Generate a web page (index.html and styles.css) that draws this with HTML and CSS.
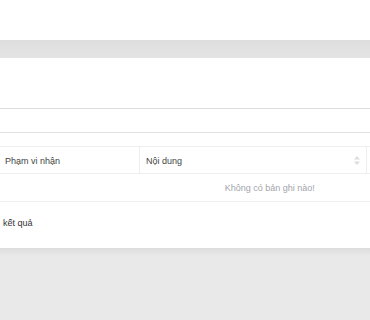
FILE: index.html
```html
<!DOCTYPE html>
<html lang="vi">
<head>
    <meta charset="UTF-8">
    <title>Thông báo</title>
    <link rel="stylesheet" href="styles.css">
</head>
<body>
    <div class="topbar"></div>
    <div class="band"></div>
    <div class="panel">
        <div class="filters">
            <div class="filter-row"></div>
            <div class="filter-row"></div>
        </div>
        <div class="table-wrap">
            <table class="grid">
                <thead>
                    <tr>
                        <th class="col-scope">Phạm vi nhận</th>
                        <th class="col-content">Nội dung
                            <svg class="sort" width="6" height="9" viewBox="0 0 6 9">
                                <path d="M3 0 L6 3.5 H0 Z M3 9 L0 5.5 H6 Z" fill="#ddd"/>
                            </svg>
                        </th>
                        <th class="col-rest"></th>
                    </tr>
                </thead>
                <tbody>
                    <tr>
                        <td class="empty" colspan="3">Không có bản ghi nào!</td>
                    </tr>
                </tbody>
            </table>
        </div>
        <div class="summary">kết quả</div>
    </div>
    <div class="page-bottom"></div>
</body>
</html>
```

FILE: styles.css
```css
body {
    margin: 0;
    background-color: #e9e9e9;
    font-family: "Liberation Sans", Arial, sans-serif;
    color: #333;
    overflow: hidden;
}
.topbar {
    height: 40px;
    background-color: #fff;
}
.band {
    height: 18px;
    background: linear-gradient(#dedede, #e4e4e4);
}
.panel {
    background-color: #fff;
    height: 190px;
    overflow: hidden;
}
.filters {
    padding-top: 50px;
}
.filter-row {
    height: 23px;
    border-top: 1px solid #dcdcdc;
}
.filter-row + .filter-row {
    border-top-color: #e2e2e6;
    height: 13px;
}
.table-wrap {
    width: 540px;
}
.grid {
    width: 540px;
    border-collapse: collapse;
    table-layout: fixed;
    font-size: 9px;
}
.grid th {
    height: 25px;
    padding: 1px 0 0 5px;
    text-align: left;
    font-weight: normal;
    color: #444;
    border-top: 1px solid #eeeef0;
    border-bottom: 1px solid #eeeef0;
    border-right: 1px solid #eeeef0;
}
.col-scope {
    width: 134px;
}
.col-content {
    width: 220px;
    position: relative;
}
.grid th.col-content {
    padding-left: 6px;
}
.sort {
    position: absolute;
    right: 6px;
    top: 9px;
}
.grid td {
    height: 25px;
    border-bottom: 1px solid #eeeef0;
}
.empty {
    text-align: center;
    color: #a4a4ac;
}
.summary {
    padding: 16px 0 0 3px;
    font-size: 9px;
    color: #333;
}
.page-bottom {
    height: 72px;
    background: linear-gradient(#dcdcdc, #e9e9e9 8px);
}
```
